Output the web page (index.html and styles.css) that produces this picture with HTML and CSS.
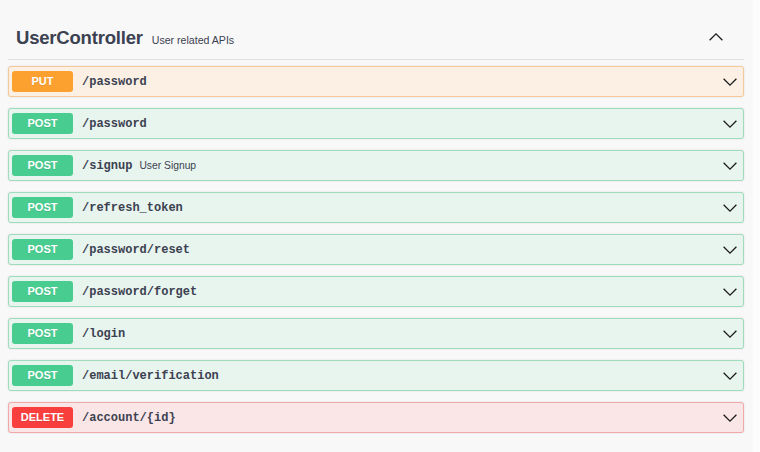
FILE: index.html
```html
<!DOCTYPE html>
<html>
<head>
<meta charset="utf-8">
<link rel="stylesheet" href="styles.css">
</head>
<body>
<div class="page">
  <div class="tag">
    <h4 class="tag-title">
      <span class="tag-name">UserController</span>
      <small class="tag-desc">User related APIs</small>
    </h4>
    <svg class="arrow up" viewBox="0 0 20 20" width="16" height="16"><path d="M2 14 L10 6 L18 14" fill="none" stroke="#1c1c1c" stroke-width="1.6"/></svg>
  </div>
  <div class="ops">
    <div class="op put">
      <span class="method">PUT</span><span class="path">/password</span>
      <svg class="arrow" viewBox="0 0 20 20" width="16" height="16"><path d="M2 6 L10 14 L18 6" fill="none" stroke="#1c1c1c" stroke-width="1.6"/></svg>
    </div>
    <div class="op post">
      <span class="method">POST</span><span class="path">/password</span>
      <svg class="arrow" viewBox="0 0 20 20" width="16" height="16"><path d="M2 6 L10 14 L18 6" fill="none" stroke="#1c1c1c" stroke-width="1.6"/></svg>
    </div>
    <div class="op post">
      <span class="method">POST</span><span class="path">/signup</span><span class="summary">User Signup</span>
      <svg class="arrow" viewBox="0 0 20 20" width="16" height="16"><path d="M2 6 L10 14 L18 6" fill="none" stroke="#1c1c1c" stroke-width="1.6"/></svg>
    </div>
    <div class="op post">
      <span class="method">POST</span><span class="path">/refresh_token</span>
      <svg class="arrow" viewBox="0 0 20 20" width="16" height="16"><path d="M2 6 L10 14 L18 6" fill="none" stroke="#1c1c1c" stroke-width="1.6"/></svg>
    </div>
    <div class="op post">
      <span class="method">POST</span><span class="path">/password/reset</span>
      <svg class="arrow" viewBox="0 0 20 20" width="16" height="16"><path d="M2 6 L10 14 L18 6" fill="none" stroke="#1c1c1c" stroke-width="1.6"/></svg>
    </div>
    <div class="op post">
      <span class="method">POST</span><span class="path">/password/forget</span>
      <svg class="arrow" viewBox="0 0 20 20" width="16" height="16"><path d="M2 6 L10 14 L18 6" fill="none" stroke="#1c1c1c" stroke-width="1.6"/></svg>
    </div>
    <div class="op post">
      <span class="method">POST</span><span class="path">/login</span>
      <svg class="arrow" viewBox="0 0 20 20" width="16" height="16"><path d="M2 6 L10 14 L18 6" fill="none" stroke="#1c1c1c" stroke-width="1.6"/></svg>
    </div>
    <div class="op post">
      <span class="method">POST</span><span class="path">/email/verification</span>
      <svg class="arrow" viewBox="0 0 20 20" width="16" height="16"><path d="M2 6 L10 14 L18 6" fill="none" stroke="#1c1c1c" stroke-width="1.6"/></svg>
    </div>
    <div class="op delete">
      <span class="method">DELETE</span><span class="path">/account/{id}</span>
      <svg class="arrow" viewBox="0 0 20 20" width="16" height="16"><path d="M2 6 L10 14 L18 6" fill="none" stroke="#1c1c1c" stroke-width="1.6"/></svg>
    </div>
  </div>
</div>
</body>
</html>
```

FILE: styles.css
```css
html, body {
  margin: 0;
  padding: 0;
}
body {
  background: #fcfcfc;
  font-family: "Liberation Sans", Arial, sans-serif;
  color: #3b4151;
  width: 760px;
  height: 452px;
  overflow: hidden;
}
.page {
  width: 753px;
  height: 452px;
  background: #f8f8f8;
  box-sizing: border-box;
  padding: 0 9px 0 8px;
}
.tag {
  display: flex;
  align-items: center;
  height: 60px;
  padding-top: 16px;
  box-sizing: border-box;
  border-bottom: 1px solid #dedfe1;
}
.tag-title {
  margin: 0;
  flex: 1;
  display: flex;
  align-items: baseline;
  padding-left: 8px;
}
.tag-name {
  font-size: 18.5px;
  font-weight: bold;
  color: #3b4151;
  letter-spacing: -0.2px;
}
.tag-desc {
  font-size: 10.6px;
  font-weight: normal;
  margin-left: 9px;
  color: #3b4151;
}
.arrow {
  flex: none;
  display: block;
}
.arrow.up {
  margin-right: 20px;
  margin-top: -2px;
}
.ops {
  padding-top: 6px;
}
.op {
  display: flex;
  align-items: center;
  height: 31px;
  box-sizing: border-box;
  border: 1px solid;
  border-radius: 3px;
  padding: 0 5px 0 3px;
  margin-bottom: 11px;
  box-shadow: 0 0 2px rgba(0, 0, 0, 0.12);
}
.op .arrow {
  margin-left: auto;
}
.method {
  width: 61px;
  height: 21px;
  line-height: 21px;
  border-radius: 3px;
  text-align: center;
  color: #fff;
  font-size: 11px;
  font-weight: bold;
  text-shadow: 0 1px 0 rgba(0, 0, 0, 0.1);
  flex: none;
}
.path {
  margin-left: 9px;
  font-family: "Liberation Mono", "Courier New", monospace;
  font-weight: bold;
  font-size: 12px;
  color: #3b4151;
}
.summary {
  margin-left: 7px;
  font-size: 10.3px;
  color: #3b4151;
}
.put {
  background: #fbf0e3;
  border-color: #f7c99a;
}
.put .method {
  background: #fca130;
}
.post {
  background: #e8f4ee;
  border-color: #9fdcbd;
}
.post .method {
  background: #49cc90;
}
.delete {
  background: #fae6e6;
  border-color: #f0a8a8;
}
.delete .method {
  background: #f93e3e;
}
```
